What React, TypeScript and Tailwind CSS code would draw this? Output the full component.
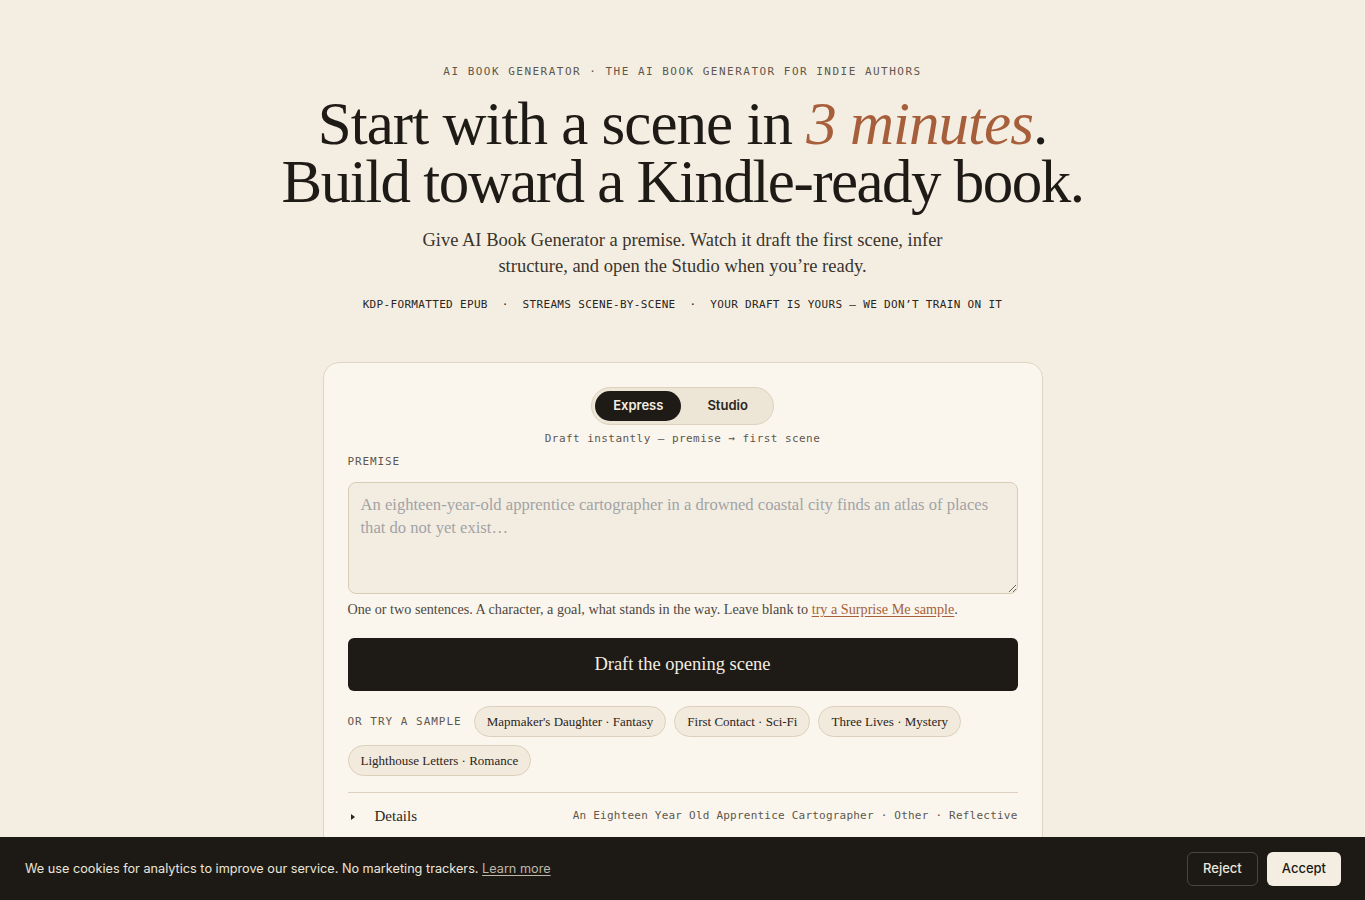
import { useState } from "react";

const serif = "font-['Liberation_Serif','DejaVu_Serif',serif]";
const mono = "font-['DejaVu_Sans_Mono','Liberation_Mono',monospace]";
const sans = "font-['Inter','Noto_Sans',sans-serif]";

const samples = [
  "Mapmaker's Daughter · Fantasy",
  "First Contact · Sci-Fi",
  "Three Lives · Mystery",
  "Lighthouse Letters · Romance",
];

export default function App() {
  const [mode, setMode] = useState<"express" | "studio">("express");
  const [premise, setPremise] = useState("");

  return (
    <div className={`min-h-screen bg-[#f4eee2] text-[#1e1a16] ${serif}`}>
      <main className="flex flex-col items-center pt-[64px] pb-[120px]">
        <p className={`${mono} text-[11px] tracking-[0.135em] text-[#5f574d]`}>
          AI BOOK GENERATOR · THE AI BOOK GENERATOR FOR INDIE AUTHORS
        </p>

        <h1 className="mt-[14px] text-center text-[61px] leading-[58px] text-[#1e1a16]">
          <span className="block tracking-[-0.016em]">
            Start with a scene in <em className="text-[#a65f3a]">3 minutes</em>.
          </span>
          <span className="block tracking-[-0.025em]">Build toward a Kindle-ready book.</span>
        </h1>

        <p className="mt-[16px] max-w-[560px] text-center text-[18.5px] leading-[26px] text-[#3a342d]">
          Give AI Book Generator a premise. Watch it draft the first scene, infer
          structure, and open the Studio when you’re ready.
        </p>

        <p className={`${mono} mt-[18px] whitespace-pre text-[11px] tracking-[0.03em] text-[#2a2520]`}>
          {"KDP-FORMATTED EPUB  ·  STREAMS SCENE-BY-SCENE  ·  YOUR DRAFT IS YOURS — WE DON’T TRAIN ON IT"}
        </p>

        <section className="mt-[49px] w-[720px] rounded-[16px] border border-[#e0d5c3] bg-[#faf6ee] px-[24px] pt-[24px] pb-[40px]">
          <div className="flex justify-center">
            <div className="flex h-[38px] items-center gap-[4px] rounded-full border border-[#ddd2bf] bg-[#ede5d5] p-[3px]">
              <button
                onClick={() => setMode("express")}
                className={`${sans} h-[30px] rounded-full px-[18px] text-[13px] font-semibold ${
                  mode === "express" ? "bg-[#1e1a16] text-[#f4eee2]" : "text-[#2a2520]"
                }`}
              >
                Express
              </button>
              <button
                onClick={() => setMode("studio")}
                className={`${sans} h-[30px] rounded-full px-[22px] text-[13px] font-semibold ${
                  mode === "studio" ? "bg-[#1e1a16] text-[#f4eee2]" : "text-[#2a2520]"
                }`}
              >
                Studio
              </button>
            </div>
          </div>

          <p className={`${mono} mt-[6px] text-center text-[11px] tracking-[0.04em] text-[#5f574d]`}>
            Draft instantly — premise → first scene
          </p>

          <label className={`${mono} mt-[6px] block text-[11px] tracking-[0.08em] text-[#5f574d]`}>
            PREMISE
          </label>

          <textarea
            value={premise}
            onChange={(e) => setPremise(e.target.value)}
            placeholder="An eighteen-year-old apprentice cartographer in a drowned coastal city finds an atlas of places that do not yet exist…"
            className={`${serif} mt-[12px] block h-[112px] w-full rounded-[8px] border border-[#d9ccb7] bg-[#f3ede1] px-[12px] py-[10px] text-[16.6px] leading-[23px] text-[#1e1a16] placeholder:text-[#a2a3a6] outline-none`}
          />

          <p className="mt-[5px] text-[14.2px] text-[#4f483f]">
            One or two sentences. A character, a goal, what stands in the way. Leave blank to{" "}
            <a href="#" className="text-[#a65f3a] underline underline-offset-2">
              try a Surprise Me sample
            </a>
            .
          </p>

          <button className="mt-[18px] h-[53px] w-full rounded-[6px] bg-[#1e1a16] text-[18.5px] text-[#f4eee2]">
            Draft the opening scene
          </button>

          <div className="mt-[15px] flex flex-wrap items-center gap-x-[8px] gap-y-[8px]">
            <span className={`${mono} mr-[4px] text-[11px] tracking-[0.09em] text-[#5f574d]`}>
              OR TRY A SAMPLE
            </span>
            {samples.map((s) => (
              <button
                key={s}
                onClick={() => setPremise(s)}
                className="h-[31px] rounded-full border border-[#dcd0bc] bg-[#f2eadd] px-[12px] text-[13px] text-[#2a2520]"
              >
                {s}
              </button>
            ))}
          </div>

          <div className="mt-[16px] border-t border-[#ddd2c0]" />

          <div className="mt-[12px] flex items-center justify-between">
            <div className="flex items-center">
              <svg width="10" height="10" viewBox="0 0 10 10">
                <path d="M3 2 L7 5 L3 8 Z" fill="#2a2520" />
              </svg>
              <span className="ml-[17px] text-[15px] text-[#2a2520]">Details</span>
            </div>
            <span className={`${mono} text-[11px] tracking-[0.02em] text-[#5f574d]`}>
              An Eighteen Year Old Apprentice Cartographer · Other · Reflective
            </span>
          </div>
        </section>
      </main>

      <div className={`${sans} fixed inset-x-0 bottom-0 flex h-[63px] items-center justify-between bg-[#1d1a16] pl-[25px] pr-[24px]`}>
        <p className="text-[12.7px] text-[#ebe5d9]">
          We use cookies for analytics to improve our service. No marketing trackers.{" "}
          <a href="#" className="text-[#bdb6aa] underline underline-offset-2">
            Learn more
          </a>
        </p>
        <div className="flex items-center gap-[9px]">
          <button className="h-[34px] rounded-[6px] border border-[#4a4540] px-[15px] text-[13px] font-medium text-[#ebe5d9]">
            Reject
          </button>
          <button className="h-[34px] rounded-[6px] bg-[#f4eee2] px-[15px] text-[13px] font-medium text-[#1e1a16]">
            Accept
          </button>
        </div>
      </div>
    </div>
  );
}
